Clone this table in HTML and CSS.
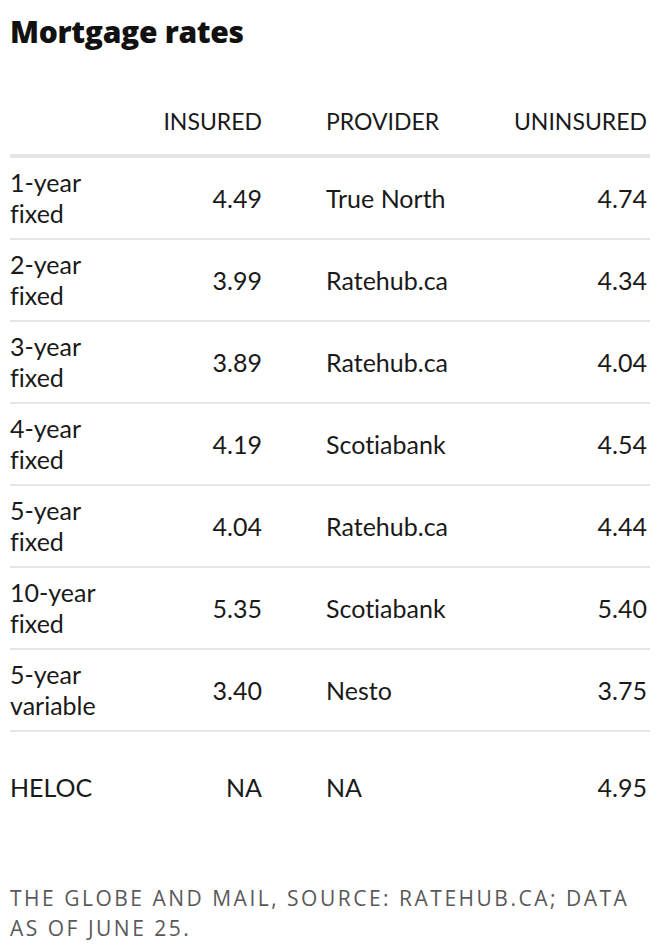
FILE: index.html
```html
<!DOCTYPE html>
<html lang="en">
<head>
<meta charset="utf-8">
<title>Mortgage rates</title>
<link rel="stylesheet" href="styles.css">
</head>
<body>
<main class="graphic">
  <h1 class="title">Mortgage rates</h1>
  <table class="rates">
    <colgroup>
      <col class="c-term"><col class="c-ins"><col class="c-prov"><col class="c-unins">
    </colgroup>
    <thead>
      <tr>
        <th></th>
        <th class="num">INSURED</th>
        <th class="prov">PROVIDER</th>
        <th class="num last">UNINSURED</th>
      </tr>
    </thead>
    <tbody>
      <tr><td>1-year<br>fixed</td><td class="num">4.49</td><td class="prov">True North</td><td class="num last">4.74</td></tr>
      <tr><td>2-year<br>fixed</td><td class="num">3.99</td><td class="prov">Ratehub.ca</td><td class="num last">4.34</td></tr>
      <tr><td>3-year<br>fixed</td><td class="num">3.89</td><td class="prov">Ratehub.ca</td><td class="num last">4.04</td></tr>
      <tr><td>4-year<br>fixed</td><td class="num">4.19</td><td class="prov">Scotiabank</td><td class="num last">4.54</td></tr>
      <tr><td>5-year<br>fixed</td><td class="num">4.04</td><td class="prov">Ratehub.ca</td><td class="num last">4.44</td></tr>
      <tr><td>10-year<br>fixed</td><td class="num">5.35</td><td class="prov">Scotiabank</td><td class="num last">5.40</td></tr>
      <tr><td>5-year<br>variable</td><td class="num">3.40</td><td class="prov">Nesto</td><td class="num last">3.75</td></tr>
      <tr class="single"><td>HELOC</td><td class="num">NA</td><td class="prov">NA</td><td class="num last">4.95</td></tr>
    </tbody>
  </table>
  <p class="source">THE GLOBE AND MAIL, SOURCE: RATEHUB.CA; DATA AS OF JUNE 25.</p>
</main>
</body>
</html>
```

FILE: styles.css
```css
html, body {
  margin: 0;
  padding: 0;
  background: #ffffff;
}

body {
  font-family: Lato, "Open Sans", sans-serif;
  font-variant-ligatures: none;
  color: #1a1a1a;
}

.graphic {
  padding: 14px 10px 0 10px;
}

.title {
  margin: 0;
  font-family: "Open Sans", Lato, sans-serif;
  font-size: 30px;
  line-height: 36px;
  font-weight: 800;
  letter-spacing: -0.3px;
  color: #111111;
}

.rates {
  width: 640px;
  margin-top: 57px;
  border-collapse: collapse;
  table-layout: fixed;
}

.c-term { width: 140px; }
.c-ins { width: 112px; }
.c-prov { width: 240px; }
.c-unins { width: 148px; }

.rates th {
  font-size: 23px;
  line-height: 29px;
  font-weight: 400;
  padding: 0 0 18px 0;
  border-bottom: 4px solid #e3e4e6;
  text-align: left;
}

.rates td {
  font-size: 25px;
  line-height: 31px;
  padding: 9px 0;
  border-bottom: 2px solid #e6e6e6;
  vertical-align: middle;
  text-align: left;
}

.rates .num { text-align: right; }
.rates .prov { padding-left: 64px; }
.rates .last { padding-right: 3px; }

.rates tr.single td {
  padding-top: 40px;
  padding-bottom: 38px;
  border-bottom: none;
}

.source {
  margin: 42px 0 0 0;
  font-family: "Open Sans", sans-serif;
  font-size: 21px;
  line-height: 30px;
  letter-spacing: 2.5px;
  color: #595959;
}
```
